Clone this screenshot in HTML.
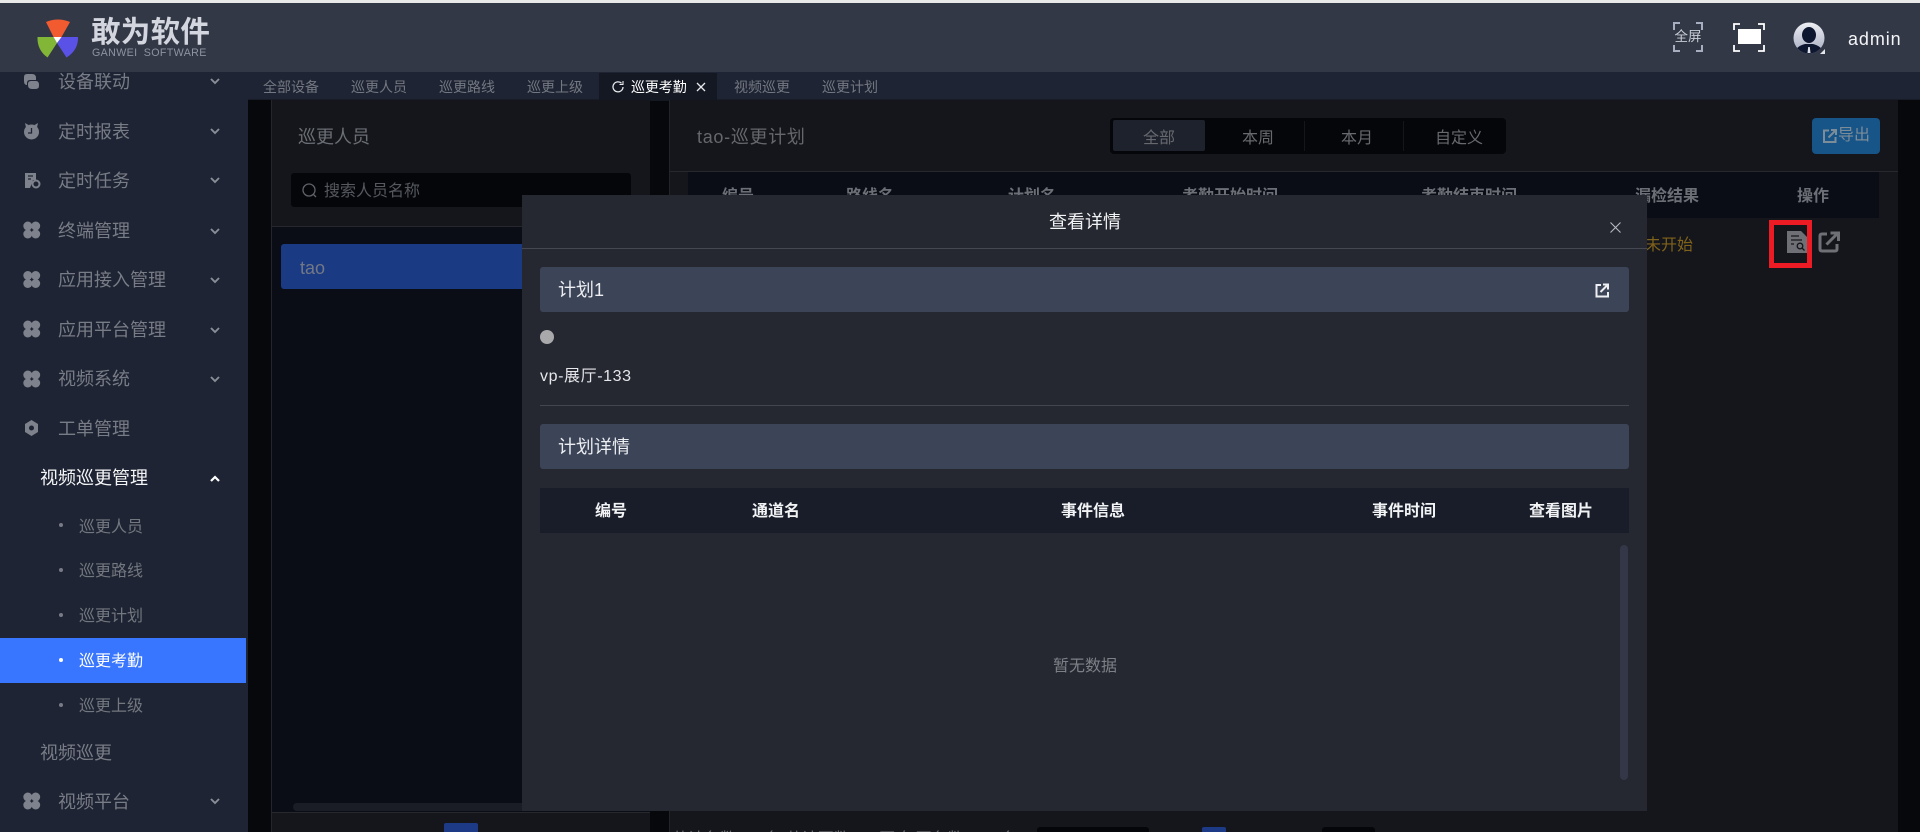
<!DOCTYPE html>
<html lang="zh-CN"><head><meta charset="utf-8"><title>敢为软件</title>
<style>
html,body{margin:0;padding:0;width:1920px;height:832px;overflow:hidden;background:#07080c}
body{position:relative;font-family:"Liberation Sans","Noto Sans CJK SC",sans-serif}
div,span,svg{position:absolute;display:block}
.t{white-space:nowrap;transform:translateY(-50%)}
.c{white-space:nowrap;transform:translate(-50%,-50%)}
.m{font-size:18px;color:#787c86;left:58px;line-height:24px}
.s{font-size:16px;color:#73777f;left:79px;line-height:22px}
.d{width:4px;height:4px;left:59px;border-radius:50%;background:#777b85}
.tab{font-size:14px;color:#747882;top:87px;line-height:20px}
.th{font-size:16px;font-weight:bold;color:#6c6f76;top:197px;line-height:20px}
.mh{font-size:16px;font-weight:bold;color:#f2f3f5;top:512px;line-height:20px}
.seg{font-size:16px;color:#67696f;top:139px;line-height:22px}
</style></head><body>
<div style="left:0;top:0;width:1920px;height:3px;background:#e9e9e9"></div>
<div style="left:0;top:3px;width:1920px;height:69px;background:#333847"></div>

<!-- logo -->
<svg style="left:35px;top:17px" width="46" height="42" viewBox="35 17 46 42">
<path d="M46 22Q58 17 70 22L61.500 37H53.500Z" fill="#f25a30"/>
<path d="M37.500 37H53.500L57 43 47.500 57.500Q37 50 37.500 37Z" fill="#82b636"/>
<path d="M61 37H78Q78.500 50 66.500 57.500L57 43Z" fill="#5a52e6"/>
<path d="M53.500 37H61.500L57 43Z" fill="#fff"/>
</svg>
<div class="t" style="left:91px;top:33px;font-size:29.500px;font-weight:bold;letter-spacing:.3px;color:#d3d6de;line-height:34px">敢为软件</div>
<div class="t" style="left:92px;top:52.500px;font-size:10.700px;letter-spacing:.35px;color:#8d93a2;line-height:12px;word-spacing:3px">GANWEI SOFTWARE</div>

<!-- header right -->
<svg style="left:1672px;top:21px" width="32" height="32" viewBox="0 0 32 32" fill="none" stroke="#a7aebf" stroke-width="2"><path d="M2 9V2H8M24 2H30V9M30 24V30H24M8 30H2V24"/></svg>
<div class="c" style="left:1688px;top:37px;font-size:13.500px;color:#c8ccd5;line-height:16px">全屏</div>
<svg style="left:1732px;top:22px" width="34" height="31" viewBox="0 0 34 31" fill="none" stroke="#fff" stroke-width="1.800"><path d="M2 8V2H8M26 2H32V8M32 23V29H26M8 29H2V23"/><rect x="6" y="7" width="23" height="15" fill="#fff" stroke="none"/></svg>
<svg style="left:1793px;top:22px" width="32" height="32" viewBox="0 0 32 32"><defs><clipPath id="a"><circle cx="16" cy="16" r="15.500"/></clipPath><linearGradient id="g" x1="0" y1="0" x2="0" y2="1"><stop offset="0" stop-color="#eef0f4"/><stop offset="1" stop-color="#a4aac0"/></linearGradient></defs><g clip-path="url(#a)"><rect width="32" height="32" fill="url(#g)"/><ellipse cx="16" cy="13" rx="7" ry="8" fill="#0e1730"/><path d="M1 32Q3 24 12 22H20Q29 24 31 32Z" fill="#0e1730"/><path d="M15.200 25H16.800L17.500 31H14.500Z" fill="#dfe2ea"/></g><path d="M32 27V32H27Z" fill="#e4e6ec"/></svg>
<div class="t" style="left:1848px;top:39px;font-size:18px;letter-spacing:.9px;color:#f4f5f7;line-height:22px">admin</div>

<!-- sidebar -->
<div style="left:0;top:72px;width:248px;height:760px;background:#1e2433"></div>
<div class="t m" style="top:82px">设备联动</div>
<div class="t m" style="top:132px">定时报表</div>
<div class="t m" style="top:181px">定时任务</div>
<div class="t m" style="top:231px">终端管理</div>
<div class="t m" style="top:280px">应用接入管理</div>
<div class="t m" style="top:330px">应用平台管理</div>
<div class="t m" style="top:379px">视频系统</div>
<div class="t m" style="top:429px">工单管理</div>
<div class="t m" style="top:478px;left:40px;color:#f4f5f7">视频巡更管理</div>
<div style="left:0;top:638px;width:246px;height:45px;background:#3876ff"></div>
<div class="d" style="top:523px"></div><div class="t s" style="top:528px">巡更人员</div>
<div class="d" style="top:568px"></div><div class="t s" style="top:572px">巡更路线</div>
<div class="d" style="top:613px"></div><div class="t s" style="top:617px">巡更计划</div>
<div class="d" style="top:658px;background:#fff"></div><div class="t s" style="top:662px;color:#fff">巡更考勤</div>
<div class="d" style="top:703px"></div><div class="t s" style="top:707px">巡更上级</div>
<div class="t m" style="top:753px;left:40px">视频巡更</div>
<div class="t m" style="top:802px">视频平台</div>

<!-- sidebar chevrons -->
<svg style="left:0;top:72px" width="248" height="760" viewBox="0 72 248 760" fill="none" stroke="#8a8e98" stroke-width="1.900">
<path d="M211 79L215 83 219 79M211 129L215 133 219 129M211 178L215 182 219 178M211 229L215 233 219 229M211 278L215 282 219 278M211 328L215 332 219 328M211 377L215 381 219 377M211 799L215 803 219 799"/>
<path d="M211 481L215 477 219 481" stroke="#fff" stroke-width="2.200"/>
</svg>
<!-- sidebar icons -->
<svg style="left:0;top:72px" width="48" height="760" viewBox="0 72 48 760" fill="#7e828c">
<path d="M27 74H32Q36 74 36 78V80H30Q27 80 27 83V85H27Q24 85 24 81V77Q24 74 27 74ZM31 81H36Q39 81 39 85V86Q39 89 35 89H32Q28 89 28 85V84Q28 81 31 81Z"/>
<circle cx="31.500" cy="132" r="7.500"/><path d="M25 123L28.500 125 26 127.500ZM38 123L34.500 125 37 127.500Z"/><path d="M31.500 128V133H28" stroke="#1e2433" stroke-width="1.300" fill="none"/>
<path d="M25 173H36V180H33L30 188H25Z"/><circle cx="36" cy="184" r="3.500" fill="none" stroke="#7e828c" stroke-width="2"/><path d="M28 176H33M28 179H31" stroke="#1e2433" stroke-width="1.200"/>
<g id="f"><circle cx="27.800" cy="226" r="4.500"/><circle cx="35.700" cy="226" r="4.500"/><circle cx="27.800" cy="234" r="4.500"/><circle cx="35.700" cy="234" r="4.500"/></g>
<use href="#f" y="49.500"/><use href="#f" y="99"/><use href="#f" y="149"/><use href="#f" y="571"/>
<path d="M31.500 420L38 424V432L31.500 436 25 432V424Z"/><circle cx="31.500" cy="428" r="2.500" fill="#1e2433"/>
</svg>

<!-- tabs -->
<div style="left:248px;top:72px;width:1672px;height:27px;background:#1e2433"></div>
<div style="left:248px;top:99px;width:1672px;height:1px;background:#181c27"></div>
<div class="t tab" style="left:263px">全部设备</div>
<div class="t tab" style="left:351px">巡更人员</div>
<div class="t tab" style="left:439px">巡更路线</div>
<div class="t tab" style="left:527px">巡更上级</div>
<div style="left:599px;top:73px;width:118px;height:28px;background:#141823"></div>
<svg style="left:611px;top:80px" width="14" height="14" viewBox="0 0 14 14" fill="none" stroke="#e6e8ec" stroke-width="1.300"><path d="M12 7A5 5 0 1 1 10.500 3.300"/><path d="M12 1V4.500H8.500" stroke-width="1.100"/></svg>
<div class="t tab" style="left:631px;color:#fff;letter-spacing:-.1px">巡更考勤</div>
<svg style="left:696px;top:82px" width="10" height="10" viewBox="0 0 10 10" stroke="#e6e8ec" stroke-width="1.300"><path d="M1 1L9 9M9 1L1 9"/></svg>
<div class="t tab" style="left:734px">视频巡更</div>
<div class="t tab" style="left:822px">巡更计划</div>

<!-- left panel -->
<div style="left:271px;top:100px;width:379px;height:732px;background:#14161b;border-left:1px solid #24262d;box-sizing:border-box"></div>
<div style="left:272px;top:226px;width:378px;height:586px;background:#0a0d15;border-top:1px solid #26282e;box-sizing:border-box"></div>
<div class="t" style="left:298px;top:137px;font-size:18px;color:#6b6e75;line-height:24px">巡更人员</div>
<div style="left:291px;top:173px;width:340px;height:34px;background:#05060a;border-radius:3px"></div>
<svg style="left:301px;top:182px" width="16" height="16" viewBox="0 0 16 16" fill="none" stroke="#5f6269" stroke-width="1.300"><circle cx="8" cy="8" r="6"/><path d="M12.500 12.500L15 15"/></svg>
<div class="t" style="left:324px;top:192px;font-size:16px;color:#55585f;line-height:22px">搜索人员名称</div>
<div style="left:281px;top:244px;width:360px;height:45px;background:#1b3a84;border-radius:3px"></div>
<div class="t" style="left:300px;top:268px;font-size:18px;color:#727884;line-height:22px">tao</div>
<div style="left:293px;top:803px;width:332px;height:8px;background:#1a1d25;border-radius:4px"></div>
<div style="left:272px;top:812px;width:378px;height:1px;background:#26282e"></div>
<div style="left:444px;top:823px;width:34px;height:9px;background:#1d3a86;border-radius:2px 2px 0 0"></div>

<!-- right panel -->
<div style="left:669px;top:100px;width:1229px;height:732px;background:#14161b;border-left:1px solid #22242a;box-sizing:border-box"></div>
<div style="left:670px;top:171px;width:1228px;height:1px;background:#26282e"></div>
<div class="t" style="left:697px;top:137px;font-size:18px;letter-spacing:.7px;color:#65676d;line-height:24px">tao-巡更计划</div>
<div style="left:1110px;top:118px;width:396px;height:36px;background:#05060a;border-radius:4px"></div>
<div style="left:1113px;top:120px;width:92px;height:31px;background:#1e222c;border-radius:2px"></div>
<div style="left:1304px;top:121px;width:1px;height:30px;background:#14161b"></div>
<div style="left:1403px;top:121px;width:1px;height:30px;background:#14161b"></div>
<div class="c seg" style="left:1159px">全部</div>
<div class="c seg" style="left:1258px">本周</div>
<div class="c seg" style="left:1357px">本月</div>
<div class="c seg" style="left:1459px">自定义</div>
<div style="left:1812px;top:118px;width:68px;height:36px;background:#175487;border-radius:4px"></div>
<svg style="left:1823px;top:129px" width="14" height="14" viewBox="0 0 14 14" fill="none" stroke="#7d8c99" stroke-width="2"><path d="M6 1.500H1V13H12.500V8M5.500 8.500L12.500 1.500M8 1H13V6"/></svg>
<div class="t" style="left:1838px;top:136px;font-size:16px;color:#7d8c99;line-height:22px">导出</div>
<div style="left:688px;top:172px;width:1191px;height:46px;background:#0a0d15"></div>
<div class="c th" style="left:738px">编号</div>
<div class="c th" style="left:870px">路线名</div>
<div class="c th" style="left:1032px">计划名</div>
<div class="c th" style="left:1230px">考勤开始时间</div>
<div class="c th" style="left:1469px">考勤结束时间</div>
<div class="c th" style="left:1667px">漏检结果</div>
<div class="c th" style="left:1813px">操作</div>
<div class="t" style="left:1645px;top:246px;font-size:16px;color:#80621b;line-height:22px">未开始</div>
<div style="left:1769px;top:220px;width:43px;height:48px;border:5px solid #ed1c24;box-sizing:border-box"></div>
<svg style="left:1787px;top:231px" width="20" height="22" viewBox="0 0 20 22"><path d="M0 0H14L20 6V22H0Z" fill="#6f7076"/><path d="M4 5H12M4 9H15M4 13H7" stroke="#14161b" stroke-width="1.300"/><circle cx="13" cy="15" r="2.800" fill="none" stroke="#14161b" stroke-width="1.300"/><path d="M15 17L17.500 19.500" stroke="#14161b" stroke-width="1.300"/></svg>
<svg style="left:1818px;top:231px" width="22" height="22" viewBox="0 0 22 22" fill="none" stroke="#6f7076" stroke-width="3"><path d="M9 3H4Q2 3 2 5V18Q2 20 4 20H17Q19 20 19 18V13M8.500 13.500L19 3M12.500 2H20.500V10"/></svg>
<div class="t" style="left:672px;top:840px;font-size:16px;color:#6c6f76;line-height:22px">共计条数：1 条 共计页数：1 页 每页条数：10 条</div>
<div style="left:1037px;top:827px;width:112px;height:5px;background:#05060a;border-radius:3px 3px 0 0"></div>
<div style="left:1202px;top:827px;width:24px;height:5px;background:#1d3a86;border-radius:2px 2px 0 0"></div>
<div style="left:1322px;top:827px;width:53px;height:5px;background:#05060a;border-radius:3px 3px 0 0"></div>

<!-- modal -->
<div style="left:522px;top:195px;width:1125px;height:616px;background:#252731"></div>
<div style="left:522px;top:248px;width:1125px;height:1px;background:#454751"></div>
<div class="c" style="left:1085px;top:222px;font-size:18px;color:#f2f3f5;line-height:24px">查看详情</div>
<svg style="left:1610px;top:222px" width="11" height="11" viewBox="0 0 11 11" stroke="#b8bac0" stroke-width="1.100"><path d="M.5 .5L10.500 10.500M10.500 .5L.5 10.500"/></svg>
<div style="left:540px;top:267px;width:1089px;height:45px;background:#3c4457;border-radius:3px"></div>
<div class="t" style="left:558px;top:290px;font-size:18px;color:#eceef2;line-height:24px">计划1</div>
<svg style="left:1595px;top:283px" width="14" height="15" viewBox="0 0 14 15" fill="none" stroke="#eceef2" stroke-width="2"><path d="M6 2H1.500V13.500H13V9M5.500 9L12.500 2M8 1.500H13V6.500"/></svg>
<div style="left:540px;top:330px;width:14px;height:14px;border-radius:50%;background:#a9a9ac"></div>
<div class="t" style="left:540px;top:376.500px;font-size:16px;letter-spacing:.6px;color:#e6e7ea;line-height:22px">vp-展厅-133</div>
<div style="left:540px;top:405px;width:1089px;height:1px;background:#44464f"></div>
<div style="left:540px;top:424px;width:1089px;height:45px;background:#3c4457;border-radius:3px"></div>
<div class="t" style="left:558px;top:447px;font-size:18px;color:#eceef2;line-height:24px">计划详情</div>
<div style="left:540px;top:488px;width:1089px;height:45px;background:#191d29"></div>
<div class="c mh" style="left:611px">编号</div>
<div class="c mh" style="left:776px">通道名</div>
<div class="c mh" style="left:1093px">事件信息</div>
<div class="c mh" style="left:1404px">事件时间</div>
<div class="c mh" style="left:1561px">查看图片</div>
<div style="left:1620px;top:545px;width:8px;height:235px;background:#333747;border-radius:4px"></div>
<div class="c" style="left:1085px;top:666.500px;font-size:16px;color:#7e8087;line-height:22px">暂无数据</div>
</body></html>
